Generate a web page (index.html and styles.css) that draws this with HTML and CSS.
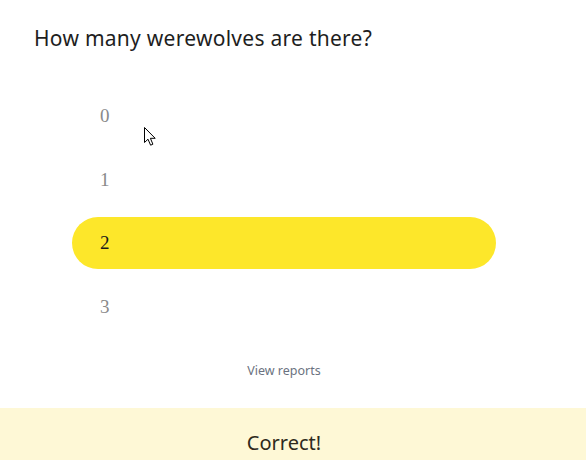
FILE: index.html
```html
<!DOCTYPE html>
<html>
<head>
<meta charset="utf-8">
<link rel="stylesheet" href="styles.css">
</head>
<body>
<div class="page">
  <h1 class="question">How many werewolves are there?</h1>
  <ul class="options">
    <li class="option">0</li>
    <li class="option">1</li>
    <li class="option selected">2</li>
    <li class="option">3</li>
  </ul>
  <div class="reports">View reports</div>
  <div class="result">Correct!</div>
  <svg class="cursor" width="13" height="20" viewBox="0 0 13 20">
    <path d="M0.5 0.5 L0.5 15.5 L4 12.2 L6.6 18.2 L8.9 17.2 L6.4 11.3 L11.2 11.3 Z" fill="#fff" stroke="#000" stroke-width="1" stroke-linejoin="miter"/>
  </svg>
</div>
</body>
</html>
```
FILE: styles.css
```css
html, body {
  margin: 0;
  padding: 0;
  background: #fff;
}
.page {
  position: relative;
  width: 586px;
  height: 460px;
  overflow: hidden;
  display: flex;
  flex-direction: column;
}
.question {
  margin: 0;
  padding: 25px 0 0 34px;
  font-family: "Noto Sans", sans-serif;
  font-weight: 400;
  font-size: 21px;
  line-height: 26px;
  letter-spacing: 0.27px;
  color: #1e1e1e;
}
.options {
  list-style: none;
  margin: 39px 0 0 72px;
  padding: 0;
  width: 424px;
  display: flex;
  flex-direction: column;
  gap: 11.5px;
}
.option {
  height: 52px;
  border-radius: 26px;
  padding-left: 28px;
  display: flex;
  align-items: center;
  font-family: "Liberation Serif", serif;
  font-size: 19px;
  color: #8a8a8a;
}
.option.selected {
  background: #fde72a;
  color: #1a1a1a;
}
.reports {
  margin-top: 30px;
  padding-right: 18px;
  text-align: center;
  font-family: "Noto Sans", sans-serif;
  font-size: 12.5px;
  line-height: 16px;
  color: #6b7280;
}
.result {
  margin-top: auto;
  height: 52px;
  background: #fef8d6;
  display: flex;
  align-items: center;
  justify-content: center;
  padding: 17px 18px 0 0;
  box-sizing: border-box;
  font-family: "Noto Sans", sans-serif;
  font-size: 20px;
  color: #2e2a1c;
}
.cursor {
  position: absolute;
  left: 144px;
  top: 127px;
}
```
